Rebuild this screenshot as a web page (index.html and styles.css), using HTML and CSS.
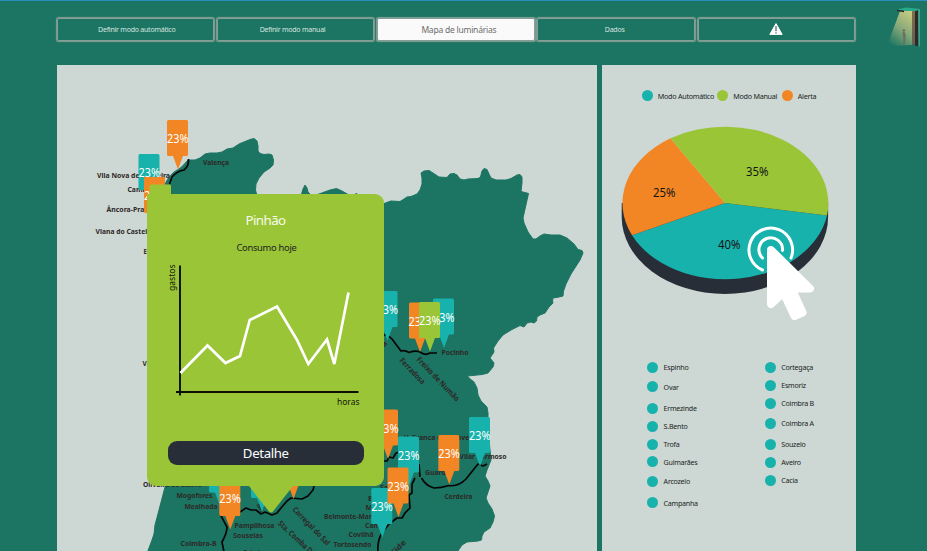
FILE: index.html
```html
<!DOCTYPE html>
<html lang="pt">
<head>
<meta charset="utf-8">
<title>Mapa de luminárias</title>
<link rel="stylesheet" href="styles.css">
</head>
<body>
<header class="topbar">
  <nav class="tabs">
    <a class="tab">Definir modo automático</a>
    <a class="tab">Definir modo manual</a>
    <a class="tab active">Mapa de luminárias</a>
    <a class="tab">Dados</a>
    <a class="tab"><svg width="14" height="12" viewBox="0 0 14 12"><path d="M7 .6 13.2 11.4H.8z" fill="#fff" stroke="#fff" stroke-linejoin="round"/><path d="M7 3v5.300M7 9.300v1.300" stroke="#34505a" stroke-width="1.100"/></svg></a>
  </nav>
  <svg class="logo" width="34" height="42" viewBox="886 6 34 42">
    <defs><linearGradient id="beam" x1="0.8" y1="0" x2="0.2" y2="1"><stop offset="0" stop-color="#c5ca80"/><stop offset=".5" stop-color="#86a879"/><stop offset="1" stop-color="#1b7562"/></linearGradient>
    <linearGradient id="post" x1="0" y1="0" x2="0" y2="1"><stop offset="0" stop-color="#7b7046"/><stop offset="1" stop-color="#695c53"/></linearGradient></defs>
    <path d="M900 11 887 46 912 45 914 11z" fill="url(#beam)"/>
    <path d="M912 11h4v34l-4-1z" fill="url(#post)"/>
    <path d="M915 10h3.500v36.500l-3.500-1z" fill="#292a2c"/>
    <path d="M918 9h2v37.500h-1.500z" fill="#43a287"/>
    <path d="M897 9.500 906 7.500 920 9 916 11 904 11z" fill="#27a98c"/>
    <path d="M897 9.700 904 10.800v1.400l-7-1.200z" fill="#222"/>
    <circle cx="903.800" cy="30.500" r="1.300" fill="#6b6f62"/>
    <path d="M902.500 32.500c2-1 3 0 3 2.500v5l-1 5h-2l1-5z" fill="#6b6f62"/>
  </svg>
</header>
<main class="content">
  <section class="map">
    <svg class="map-art" width="540" height="486" viewBox="57 65 540 486">
      <defs>
        <path id="pin" d="M1.500 0h18a1.500 1.500 0 0 1 1.500 1.500v33a1.500 1.500 0 0 1-1.500 1.500H16L11 49.500 6 36H1.500A1.500 1.500 0 0 1 0 34.500v-33A1.500 1.500 0 0 1 1.500 0z"/>
      </defs>
      <path class="land" d="M188 160 195 160 200 158 205 154 210 153 217 153 222 152 227 149 233 148 239 144 250 139.500 254 138.500 257 141 258 146 258 151 260 153.500 264 154.500 269 154 272 155 273.500 160 273 165 270 168 264 172 259 178 256 184 255.500 190 257 196H301L303 189 305 185 307 188 308 192 312 196 319 194 330 190 336.500 188.500 342 191 349 195H353L357 193.500 358 198 383 204 388 202 391 201 400 201.500 404 199 407 197 411 196.500 417 194 420 190 422 184 422 178 421 173 424 171 429 170.500 433 173 439 177 447 177.500 450 174 454 173.500 457 175 460 179 464 180 468 179 478 178.500 480.500 177 482 171 484 168.500 487 169.500 489 174 491 178 496 180 506 180 511 178.500 517 175 520 174.500 522 177 522 183 521 191.500 528.500 193.500 525 209 523 218 524 223 528 232 533 239 536 239 540 236 544 234 551 235 560 235 567 238 574 244 578 249.500 582 250.500 583 253 580 260 571 274 566 284 563.500 291 563 296 559 297 553 298 552.500 301 553 303 549 307 545 313 540 315 537 317 536.500 321 534 323 531 322 527 323 524 327 520 325.500 511 330 503 335 498 341 493.500 348 494 352 490 358 494 363 493 367 488 373 482 374.500 467.500 376 469 378 474 382 477 388 478 395 481 401 487 407 488 413 488 430 490 450 491 460 487 470 485 476 488 481 490 486 488 492 486 498 488 503 492 509 494.500 516 493 522 490 528 484 532 482 536 481.500 540 478 541 467 542 462 545 458 551V552H147.500L152 540 154 534 155 525 159 510 165 487 171 400V194L165 184Q168 177 174 172 181 169 188 160z"/>
      <g class="rail">
        <path d="M188.500 159Q189 166 184 170 177 171 172 177L169.500 184"/>
        <path d="M381 334Q388 335 392 339L401 351Q405 350 409 352.500 416 350 420 352 425 356 430 353L437 353"/>
        <path d="M381 461H387L389 457 393 458 396 453 400 452"/>
        <path d="M419 464 420 477M421.500 478Q426 486 434 488 441 488 449 485.500 458 487 466 479L478 464 483 466 487 464"/>
        <path d="M415 478 412 484 412 493 409 495 410 508 405 513 402 518 397 518 389 524 382 533Q377 541 378 552"/>
        <path d="M220 514 227 527Q227 533 222 542L224 552"/>
        <path d="M240 512 246 508 251 510 256 510 261 514 265 512 272 515 277 513 281 508 287 501 291 498 302 499 308 496 313 490 314 486"/>
      </g>
      <g class="station">
        <text x="203" y="165" textLength="26" lengthAdjust="spacingAndGlyphs">Valença</text>
        <text x="97" y="177.500" textLength="73" lengthAdjust="spacingAndGlyphs">Vila Nova de Cerveira</text>
        <text x="127.500" y="192" textLength="30" lengthAdjust="spacingAndGlyphs">Caminha</text>
        <text x="106.500" y="212" textLength="44" lengthAdjust="spacingAndGlyphs">Âncora-Praia</text>
        <text x="95.500" y="233.500" textLength="56" lengthAdjust="spacingAndGlyphs">Viana do Castelo</text>
        <text x="143.500" y="254" textLength="30" lengthAdjust="spacingAndGlyphs">Esposende</text>
        <text x="142.500" y="366" textLength="32" lengthAdjust="spacingAndGlyphs">Valadares</text>
        <text x="143" y="487" textLength="59" lengthAdjust="spacingAndGlyphs">Oliveira do Bairro</text>
        <text x="176.500" y="498" textLength="36" lengthAdjust="spacingAndGlyphs">Mogofores</text>
        <text x="184.500" y="509" textLength="33" lengthAdjust="spacingAndGlyphs">Mealhada</text>
        <text x="234.500" y="527.500" textLength="40" lengthAdjust="spacingAndGlyphs">Pampilhosa</text>
        <text x="233" y="538" textLength="30" lengthAdjust="spacingAndGlyphs">Souselas</text>
        <text x="180.500" y="546" textLength="36" lengthAdjust="spacingAndGlyphs">Coimbra-B</text>
        <text x="243" y="555" textLength="25" lengthAdjust="spacingAndGlyphs">Coimbra</text>
        <text x="324" y="519" textLength="56" lengthAdjust="spacingAndGlyphs">Belmonte-Mante</text>
        <text x="365" y="528" textLength="13" lengthAdjust="spacingAndGlyphs">Can</text>
        <text x="348.500" y="537" textLength="25" lengthAdjust="spacingAndGlyphs">Covilhã</text>
        <text x="333.500" y="547" textLength="38" lengthAdjust="spacingAndGlyphs">Tortosendo</text>
        <text x="368" y="501" textLength="5" lengthAdjust="spacingAndGlyphs">B</text>
        <text x="365.500" y="510" textLength="7" lengthAdjust="spacingAndGlyphs">M</text>
        <text x="380" y="490" textLength="28" lengthAdjust="spacingAndGlyphs">Sabugal</text>
        <text x="441.500" y="355" textLength="27" lengthAdjust="spacingAndGlyphs">Pocinho</text>
        <text x="404" y="440" textLength="69" lengthAdjust="spacingAndGlyphs">V. Franca das Naves</text>
        <text x="459.500" y="459" textLength="47" lengthAdjust="spacingAndGlyphs">Vilar Formoso</text>
        <text x="425" y="475" textLength="25" lengthAdjust="spacingAndGlyphs">Guarda</text>
        <text x="444.500" y="498.500" textLength="28" lengthAdjust="spacingAndGlyphs">Cerdeira</text>
        <text transform="translate(399 361) rotate(46)" textLength="33" lengthAdjust="spacingAndGlyphs">Ferradosa</text>
        <text transform="translate(416 360) rotate(46)" textLength="58" lengthAdjust="spacingAndGlyphs">Freixo de Numão</text>
        <text transform="translate(378 354) rotate(-46)" textLength="14" lengthAdjust="spacingAndGlyphs">Tua</text>
        <text transform="translate(292 510) rotate(46)" textLength="50" lengthAdjust="spacingAndGlyphs">Carregal do Sal</text>
        <text transform="translate(277.500 524) rotate(43)" textLength="52" lengthAdjust="spacingAndGlyphs">Sta. Comba Dão</text>
        <text transform="translate(256 505) rotate(55)" textLength="9" lengthAdjust="spacingAndGlyphs">M.</text>
        <text transform="translate(394 556) rotate(-46)" textLength="18" lengthAdjust="spacingAndGlyphs">Fide</text>
      </g>
      <g class="pin teal" transform="translate(138.500 154)"><use href="#pin"/><text x="0" y="23" textLength="21.500" lengthAdjust="spacingAndGlyphs">23%</text></g>
      <g class="pin orange" transform="translate(144 177)"><use href="#pin"/><text x="0" y="23" textLength="21.500" lengthAdjust="spacingAndGlyphs">23%</text></g>
      <g class="pin orange" transform="translate(167 120)"><use href="#pin"/><text x="0" y="23" textLength="21.500" lengthAdjust="spacingAndGlyphs">23%</text></g>
      <rect class="lime" x="149.500" y="184.500" width="21.500" height="36" rx="1.500"/>
      <g class="pin teal" transform="translate(376.500 291)"><use href="#pin"/><text x="0" y="23" textLength="21.500" lengthAdjust="spacingAndGlyphs">23%</text></g>
      <g class="pin teal" transform="translate(433 298.500)"><use href="#pin"/><text x="0" y="23" textLength="21.500" lengthAdjust="spacingAndGlyphs">23%</text></g>
      <g class="pin orange" transform="translate(409 302.500)"><use href="#pin"/><text x="-.5" y="23" textLength="21.500" lengthAdjust="spacingAndGlyphs">23%</text></g>
      <g class="pin green" transform="translate(419 302)"><use href="#pin"/><text x="0" y="23" textLength="21.500" lengthAdjust="spacingAndGlyphs">23%</text></g>
      <g class="pin orange" transform="translate(377 409.500)"><use href="#pin"/><text x="0" y="23" textLength="21.500" lengthAdjust="spacingAndGlyphs">23%</text></g>
      <g class="pin teal" transform="translate(398 436.500)"><use href="#pin"/><text x="0" y="23" textLength="21.500" lengthAdjust="spacingAndGlyphs">23%</text></g>
      <g class="pin orange" transform="translate(438.300 435)"><use href="#pin"/><text x="0" y="23" textLength="21.500" lengthAdjust="spacingAndGlyphs">23%</text></g>
      <g class="pin teal" transform="translate(469 417)"><use href="#pin"/><text x="0" y="23" textLength="21.500" lengthAdjust="spacingAndGlyphs">23%</text></g>
      <g class="pin teal" transform="translate(371.300 488)"><use href="#pin"/><text x="0" y="23" textLength="21.500" lengthAdjust="spacingAndGlyphs">23%</text></g>
      <g class="pin orange" transform="translate(387.500 467.500)"><use href="#pin"/><text x="0" y="23" textLength="21.500" lengthAdjust="spacingAndGlyphs">23%</text></g>
      <g class="pin teal"><use href="#pin" x="209" y="456.500"/><use href="#pin" x="251" y="462"/></g>
      <g class="pin orange"><use href="#pin" x="282.500" y="449.500"/></g>
      <g class="pin orange" transform="translate(219.300 480)"><use href="#pin"/><text x="0" y="23" textLength="21.500" lengthAdjust="spacingAndGlyphs">23%</text></g>
    </svg>
    <article class="popup">
      <h2>Pinhão</h2>
      <h3>Consumo hoje</h3>
      <svg class="chart" width="237" height="150" viewBox="147 258 237 150">
        <path d="M180 265.500V395.500M176 392H358.500" stroke="#0b0f06" stroke-width="1.900" fill="none"/>
        <path d="M180.500 373 207.500 345.500 225.500 363 240 356 249.800 320 277 306.500 297 340 308.300 364 327 339.500 334.300 364 348.500 292.500" fill="none" stroke="#fff" stroke-width="2.700"/>
        <text transform="translate(174.500 291) rotate(-90)" textLength="26.500" lengthAdjust="spacingAndGlyphs">gastos</text>
        <text x="337" y="405" textLength="22.500" lengthAdjust="spacingAndGlyphs">horas</text>
      </svg>
      <button class="detail">Detalhe</button>
      <svg class="tail" width="44" height="27" viewBox="0 0 44 27"><path d="M0 0H44L24 25.500Q22 27.500 20 25.500z"/></svg>
    </article>
  </section>
  <aside class="stats">
    <div class="legend">
      <span class="key"><i class="dot"></i>Modo Automático</span>
      <span class="key"><i class="dot dot-green"></i>Modo Manual</span>
      <span class="key"><i class="dot dot-orange"></i>Alerta</span>
    </div>
    <svg class="pie" width="253" height="212" viewBox="602 115 253 212">
      <path d="M621.700 203v14a103.200 77 0 0 0 206.400 0v-14z" fill="#272e38"/>
      <path d="M725 203 827 215.500A103.200 76.700 0 0 1 632 235.300z" fill="#18b2ac"/>
      <path d="M725 203 632 235.300A103.200 76.700 0 0 1 670.500 138.300z" fill="#f38624"/>
      <path d="M725 203 670.500 138.300A103.200 76.700 0 0 1 827 215.500z" fill="#9ac537"/>
      <text x="746" y="175.500" textLength="22.500" lengthAdjust="spacingAndGlyphs">35%</text>
      <text x="653" y="196.500" textLength="22.500" lengthAdjust="spacingAndGlyphs">25%</text>
      <text x="718" y="248.800" textLength="22.500" lengthAdjust="spacingAndGlyphs">40%</text>
      <g fill="none" stroke="#fff" stroke-width="3" stroke-linecap="round"><path d="M762.500 270A21.800 21.800 0 1 1 791 258"/><path d="M762.500 258A11.800 11.800 0 1 1 782.500 250.500"/></g>
      <path d="M771 250 810 288.500 791.500 288.500 802.500 312.500 794.500 316 783.500 292.500 771 304z" fill="#fff" stroke="#fff" stroke-width="8" stroke-linejoin="round"/>
    </svg>
    <div class="lists">
      <ul class="list first">
        <li><i class="dot"></i>Espinho</li><li><i class="dot"></i>Ovar</li><li><i class="dot"></i>Ermezinde</li><li><i class="dot"></i>S.Bento</li><li><i class="dot"></i>Trofa</li><li><i class="dot"></i>Guimarães</li><li><i class="dot"></i>Arcozelo</li><li><i class="dot"></i>Campanha</li>
      </ul>
      <ul class="list second">
        <li><i class="dot"></i>Cortegaça</li><li><i class="dot"></i>Esmoriz</li><li><i class="dot"></i>Coimbra B</li><li><i class="dot"></i>Coimbra A</li><li><i class="dot"></i>Souzelo</li><li><i class="dot"></i>Aveiro</li><li><i class="dot"></i>Cacia</li>
      </ul>
    </div>
  </aside>
</main>
</body>
</html>
```
FILE: styles.css
```css
* { box-sizing: border-box; }
body {
  margin: 0;
  height: 551px;
  overflow: hidden;
  background: #1b7562;
  border-top: 1px solid #2b8dbb;
  font-family: "Noto Sans", sans-serif;
  color: #1c1f1f;
}
.topbar { display: flex; height: 64px; padding-left: 56.500px; }
.tabs {
  display: grid;
  grid-template-columns: repeat(5, 157.500px);
  gap: 2.800px;
  height: 23px;
  margin-top: 16.500px;
}
.tab {
  display: flex;
  align-items: center;
  justify-content: center;
  border: 1.500px solid #859f96;
  border-radius: 2px;
  font-size: 7px;
  letter-spacing: -.23px;
  color: #d8e4e0;
  box-shadow: 0 0 1px 0.500px #859f96;
}
.tab:nth-child(-n+2) { padding-left: 3px; }
.tab:nth-child(2) { padding-right: 9px; }
.tab:nth-child(4) { padding-right: 3px; }
.tab:nth-child(3) { padding-left: 6px; }
.tab.active { background: #fafafa; color: #6d6d6d; font-size: 8.500px; }
.logo { margin: 5px 0 0 30.700px; }
.content { display: flex; gap: 5px; padding-left: 57px; height: 486px; }
.map { position: relative; width: 540px; background: #cdd7d3; }
.map-art { display: block; }
.land { fill: #1b7562; stroke: #1b7562; stroke-width: 1; stroke-linejoin: round; }
.rail { fill: none; stroke: #050505; stroke-width: 1.700; stroke-linejoin: round; }
.station { font-size: 7.800px; font-weight: 700; fill: #2d2928; }
.pin text { fill: #fff; font-size: 11.800px; }
.teal { fill: #18b2ac; }
.orange { fill: #f38624; }
.green, .lime { fill: #9ac537; }
.popup {
  position: absolute;
  left: 90px;
  top: 129.300px;
  width: 237px;
  height: 292.200px;
  border-radius: 0 9px 9px 9px;
  background: #9ac537;
  text-align: center;
}
.popup h2 { margin: 17px 0 0; font-size: 13.300px; line-height: 18px; letter-spacing: -.55px; font-weight: 400; color: #f7fbea; }
.popup h3 { margin: 11.500px 0 0 2px; font-size: 9.400px; line-height: 14px; letter-spacing: -.3px; font-weight: 400; }
.chart { display: block; margin-top: 3px; }
.chart text { font-size: 9.400px; fill: #14180c; }
.detail {
  display: block;
  width: 196.500px;
  height: 24px;
  margin: 33.500px 0 0 20.500px;
  padding: 0;
  border: 0;
  border-radius: 9px;
  background: #272e38;
  color: #fff;
  font: 400 13.200px/24px "Noto Sans", sans-serif;
  letter-spacing: -.35px;
}
.tail { position: absolute; left: 102px; top: 291.500px; fill: #9ac537; }
.stats { width: 253.500px; background: #cdd7d3; }
.legend { display: flex; height: 50px; padding: 24.500px 0 0 39.500px; font-size: 7.200px; letter-spacing: -.28px; line-height: 12px; }
.key { display: flex; flex: none; height: 12px; white-space: nowrap; }
.key:nth-child(1) { width: 75.500px; }
.key:nth-child(2) { width: 64.500px; }
.dot { flex: none; width: 11px; height: 11px; margin-right: 5.300px; border-radius: 50%; background: #18b2ac; }
.dot-green { background: #9ac537; }
.dot-orange { background: #f38624; }
.pie { display: block; }
.pie text { font-size: 12.500px; fill: #141616; }
.lists { display: flex; padding: 31.500px 0 0 45.300px; }
.list { flex: none; width: 117.700px; margin: 0; padding: 0; list-style: none; font-size: 7.100px; letter-spacing: -.25px; }
.second { width: 85px; }
.list li { display: flex; align-items: center; height: 17.500px; }
.first li:nth-child(2), .first li:nth-child(7) { margin-top: 2px; }
.first li:nth-child(3), .first li:nth-child(8) { margin-top: 4px; }
.first li:nth-child(4), .first li:nth-child(5) { margin-top: .5px; }
.second li { margin-top: .5px; }
.second li:first-child { margin-top: 0; }
.second li:nth-child(4) { margin-top: 2.500px; }
.second li:nth-child(5) { margin-top: 3.500px; }
```
